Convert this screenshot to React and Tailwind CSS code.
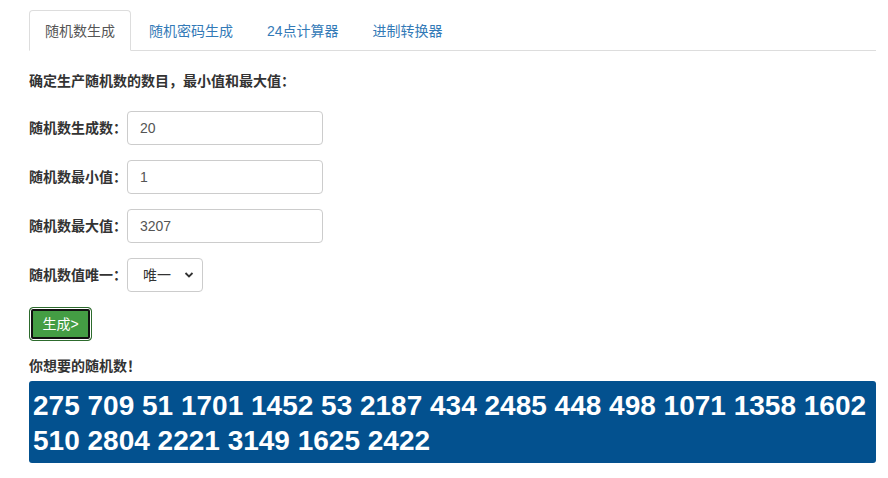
import React from "react";

const FONT = { fontFamily: '"Liberation Sans", "Noto Sans CJK SC", sans-serif' };

function Tab({ label, active }) {
  return (
    <li
      className={
        "-mb-px mr-[2px] h-[41px] rounded-t-[4px] border px-[15px] py-[10px] text-[14px] leading-[20px] " +
        (active
          ? "border-[#dddddd] border-b-white bg-white text-[#555555]"
          : "border-transparent text-[#337ab7]")
      }
    >
      {label}
    </li>
  );
}

function Row({ label, value }) {
  return (
    <div className="mt-[15px] flex h-[34px] items-center">
      <span className="w-[98px] text-[14px] font-bold leading-[20px] text-[#333333]">{label}</span>
      <div className="flex h-[34px] w-[196px] items-center rounded-[4px] border border-[#cccccc] bg-white px-[12px] text-[14px] text-[#555555]">
        {value}
      </div>
    </div>
  );
}

export default function App() {
  const numbers =
    "275 709 51 1701 1452 53 2187 434 2485 448 498 1071 1358 1602 510 2804 2221 3149 1625 2422";
  return (
    <div className="min-h-[478px] bg-white pl-[29px] pt-[10px]" style={FONT}>
      <div className="flex w-[847px] flex-col">
        <ul className="flex h-[41px] border-b border-[#dddddd]">
          <Tab label="随机数生成" active />
          <Tab label="随机密码生成" />
          <Tab label="24点计算器" />
          <Tab label="进制转换器" />
        </ul>

        <p className="mt-[20px] text-[14px] font-bold leading-[20px] text-[#333333]">
          确定生产随机数的数目，最小值和最大值：
        </p>

        <div className="mt-[5px] flex flex-col">
          <Row label="随机数生成数：" value="20" />
          <Row label="随机数最小值：" value="1" />
          <Row label="随机数最大值：" value="3207" />
          <div className="mt-[15px] flex h-[34px] items-center">
            <span className="w-[98px] text-[14px] font-bold leading-[20px] text-[#333333]">
              随机数值唯一：
            </span>
            <div className="flex h-[34px] w-[76px] items-center justify-between rounded-[4px] border border-[#cccccc] bg-white pl-[15px] pr-[8px] text-[14px] text-[#333333]">
              <span>唯一</span>
              <svg width="10" height="8" viewBox="0 0 10 8">
                <path d="M1.5 2 L5 5.5 L8.5 2" fill="none" stroke="#333" strokeWidth="1.8" />
              </svg>
            </div>
          </div>
        </div>

        <div className="mt-[15px] flex">
          <button className="flex h-[34px] w-[63px] items-center justify-center rounded-[4px] border border-[#2d6b2d] bg-[#449d44] text-[14px] leading-[20px] text-white shadow-[inset_0_0_0_1px_#ffffff,inset_0_0_0_3px_#111111]">
            生成&gt;
          </button>
        </div>

        <p className="mt-[15px] text-[14px] font-bold leading-[20px] text-[#333333]">你想要的随机数！</p>

        <div className="mt-[5px] rounded-[3px] bg-[#03518f] px-[4px] pb-[5px] pt-[7px] text-[28px] font-bold leading-[35px] text-white">
          {numbers}
        </div>
      </div>
    </div>
  );
}
